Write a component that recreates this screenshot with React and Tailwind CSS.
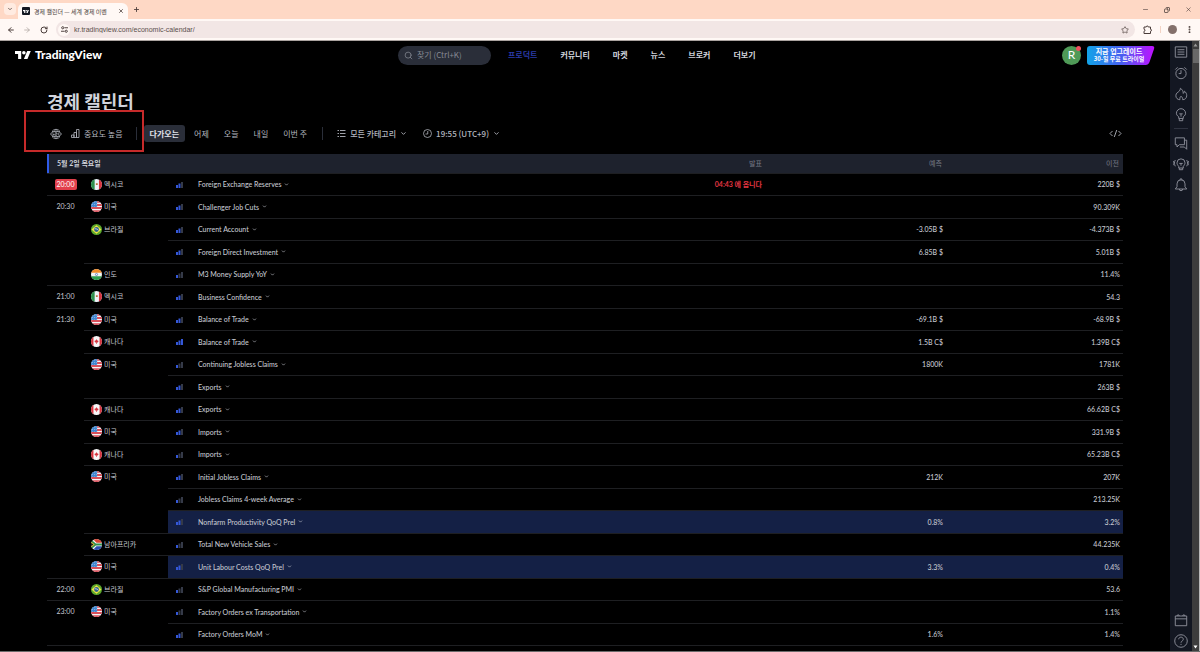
import { ChevronDown, ArrowLeft, ArrowRight, RotateCw, Star, X, Plus, Minus, Copy, MoreVertical, Search } from 'lucide-react';

// Event rows. `time` and `country` only appear on the row that opens their group,
// `timeSpan` / `countrySpan` say how many rows the group covers.
const EVENTS = [
  { time: '20:00', timeSpan: 1, live: true, country: 'mx', countrySpan: 1, level: 2, name: 'Foreign Exchange Reserves', actual: '04:43 에 옵니다', previous: '220B $' },
  { time: '20:30', timeSpan: 4, country: 'us', countrySpan: 1, level: 2, name: 'Challenger Job Cuts', previous: '90.309K' },
  { country: 'br', countrySpan: 2, level: 2, name: 'Current Account', forecast: '-3.05B $', previous: '-4.373B $' },
  { level: 2, name: 'Foreign Direct Investment', forecast: '6.85B $', previous: '5.01B $' },
  { country: 'in', countrySpan: 1, level: 1, name: 'M3 Money Supply YoY', previous: '11.4%' },
  { time: '21:00', timeSpan: 1, country: 'mx', countrySpan: 1, level: 2, name: 'Business Confidence', previous: '54.3' },
  { time: '21:30', timeSpan: 12, country: 'us', countrySpan: 1, level: 2, name: 'Balance of Trade', forecast: '-69.1B $', previous: '-68.9B $' },
  { country: 'ca', countrySpan: 1, level: 3, name: 'Balance of Trade', forecast: '1.5B C$', previous: '1.39B C$' },
  { country: 'us', countrySpan: 2, level: 1, name: 'Continuing Jobless Claims', forecast: '1800K', previous: '1781K' },
  { level: 2, name: 'Exports', previous: '263B $' },
  { country: 'ca', countrySpan: 1, level: 2, name: 'Exports', previous: '66.62B C$' },
  { country: 'us', countrySpan: 1, level: 2, name: 'Imports', previous: '331.9B $' },
  { country: 'ca', countrySpan: 1, level: 1, name: 'Imports', previous: '65.23B C$' },
  { country: 'us', countrySpan: 3, level: 2, name: 'Initial Jobless Claims', forecast: '212K', previous: '207K' },
  { level: 1, name: 'Jobless Claims 4-week Average', previous: '213.25K' },
  { level: 2, name: 'Nonfarm Productivity QoQ Prel', forecast: '0.8%', previous: '3.2%', marked: true },
  { country: 'za', countrySpan: 1, level: 1, name: 'Total New Vehicle Sales', previous: '44.235K' },
  { country: 'us', countrySpan: 1, level: 2, name: 'Unit Labour Costs QoQ Prel', forecast: '3.3%', previous: '0.4%', marked: true },
  { time: '22:00', timeSpan: 1, country: 'br', countrySpan: 1, level: 1, name: 'S&P Global Manufacturing PMI', previous: '53.6' },
  { time: '23:00', timeSpan: 2, country: 'us', countrySpan: 2, level: 1, name: 'Factory Orders ex Transportation', previous: '1.1%' },
  { level: 2, name: 'Factory Orders MoM', forecast: '1.6%', previous: '1.4%' },
];

const COUNTRIES = {
  mx: '멕시코',
  us: '미국',
  br: '브라질',
  in: '인도',
  ca: '캐나다',
  za: '남아프리카',
};

const NAV = ['프로덕트', '커뮤니티', '마켓', '뉴스', '브로커', '더보기'];
const RANGES = ['다가오는', '어제', '오늘', '내일', '이번 주'];

function Flag({ code }) {
  return (
    <svg viewBox="0 0 18 18" className="size-[11px] shrink-0 overflow-hidden rounded-full" aria-hidden="true">
      {code === 'mx' && (
        <>
          <path fill="#f0f3fa" d="M0 0h18v18H0z" />
          <path fill="#2f8f4e" d="M0 0h6v18H0z" />
          <path fill="#d8333f" d="M13 0h5v18h-5z" />
          <path fill="#b5793a" d="M8 7h3v3H8z" />
        </>
      )}
      {code === 'us' && (
        <>
          <path fill="#f5f5f7" d="M0 0h18v18H0z" />
          <path fill="#d9505b" d="M9 0h9v3H9zM9 5h9v3H9zM0 10h18v3H0zM0 15h18v3H0z" />
          <path fill="#3f86d0" d="M0 0h10v10H0z" />
          <path fill="#cfe0f5" d="M2 2h1v1H2zM5 2h1v1H5zM8 2h1v1H8zM2 5h1v1H2zM5 5h1v1H5zM8 5h1v1H8zM2 8h1v1H2zM5 8h1v1H5zM8 8h1v1H8z" />
        </>
      )}
      {code === 'br' && (
        <>
          <path fill="#5ba82c" d="M0 0h18v18H0z" />
          <path fill="#f0e442" d="M9 2q4 3 8 7-4 4-8 7-4-3-8-7 4-4 8-7z" />
          <circle cx="9" cy="9" r="4" fill="#2c6090" />
          <path stroke="#e8f1fb" strokeWidth="1.400" fill="none" d="M6 8c2-.5 4 0 6 2" />
        </>
      )}
      {code === 'in' && (
        <>
          <path fill="#f5f5f7" d="M0 0h18v18H0z" />
          <path fill="#f28c28" d="M0 0h18v6H0z" />
          <path fill="#2f9e4f" d="M0 12h18v6H0z" />
          <circle cx="9" cy="9" r="1.800" fill="none" stroke="#3c5aa8" />
        </>
      )}
      {code === 'ca' && (
        <>
          <path fill="#f7f7f8" d="M0 0h18v18H0z" />
          <path fill="#d5343f" d="M0 0h4v18H0zM14 0h4v18h-4z" />
          <path fill="#d5343f" d="m9 5 1 2 2.500 1-1.500 2.500H9.500V13h-1v-2.500H7L5.500 8 8 7z" />
        </>
      )}
      {code === 'za' && (
        <>
          <path fill="#f5f5f7" d="M0 0h18v18H0z" />
          <path fill="#d8432f" d="M3 0h15v6H9z" />
          <path fill="#2a4fae" d="M3 18h15v-6H9z" />
          <path fill="#2f8f4e" d="M0 1 8 7.500h10v3H8L0 17z" />
          <path fill="#f0bf30" d="m0 4 6 5-6 5z" />
          <path fill="#131722" d="m0 6 4 3-4 3z" />
        </>
      )}
    </svg>
  );
}

function Importance({ level }) {
  const on = '#3558d8';
  const off = '#353a48';
  return (
    <svg viewBox="0 0 7 7" className="size-[7px]" role="img" aria-label={`${level}`}>
      <path fill={on} d="M0 4h2v3H0z" />
      <path fill={level > 1 ? on : off} d="M2.500 2.500h2V7h-2z" />
      <path fill={level > 2 ? on : off} d="M5 1h2v6H5z" />
    </svg>
  );
}

function BrandMark({ className }) {
  return (
    <svg viewBox="0 0 36 18" className={className} fill="currentColor" aria-hidden="true">
      <path d="M14 18H7V7H0V0h14zM28 18h-8l7.500-18h8z" />
      <circle cx="20" cy="4" r="4" />
    </svg>
  );
}

function RailIcon({ label, children }) {
  return (
    <button type="button" aria-label={label} className="flex h-[21px] w-full items-center justify-center">
      <svg viewBox="0 0 28 28" className="size-4" fill="none" stroke="currentColor" strokeWidth="1.600" strokeLinejoin="round">
        {children}
      </svg>
    </button>
  );
}

function BrowserChrome() {
  return (
    <div className="shrink-0 border-b border-[#aaa39f] bg-[#fff8f5] text-[#4a3d3a]">
      <div className="flex h-[19px] items-end bg-[#fed8c5] pl-1">
        <button type="button" aria-label="tabs" className="mb-1 flex size-3 items-center justify-center rounded bg-[#ffebe1]">
          <ChevronDown size={6} strokeWidth={3} />
        </button>
        <div className="ml-[2px] flex h-4 w-[110px] items-center rounded-t-md bg-[#fff8f5] pl-1">
          <span className="flex size-2 shrink-0 items-center justify-center rounded-[1px] bg-[#131722] text-white">
            <BrandMark className="h-[3px] w-[6px]" />
          </span>
          <span className="ml-1 w-20 text-[6px] whitespace-nowrap">경제 캘린더 — 세계 경제 이벤</span>
          <button type="button" aria-label="close tab" className="ml-1">
            <X size={6} strokeWidth={3} />
          </button>
        </div>
        <button type="button" aria-label="new tab" className="mb-[6px] ml-[5px]">
          <Plus size={7} strokeWidth={3} />
        </button>
        <div className="mr-2 mb-[6px] ml-auto flex items-center gap-[15px]">
          <Minus size={7} strokeWidth={2} />
          <Copy size={6} strokeWidth={3} className="-scale-x-100" />
          <X size={7} strokeWidth={2} />
        </div>
      </div>
      <div className="flex h-[21px] items-center pr-[6px] pl-[7px]">
        <ArrowLeft size={8} strokeWidth={3} />
        <ArrowRight size={8} strokeWidth={2} className="ml-2 text-[#a39a96]" />
        <RotateCw size={8} strokeWidth={3} className="ml-[9px]" />
        <div className="ml-2 flex h-[17px] flex-1 items-center rounded-full bg-[#f2e6e5] pr-[6px] pl-[2px]">
          <span className="flex size-3 items-center justify-center rounded-full bg-[#fff8f5]">
            <svg viewBox="0 0 16 16" className="size-[7px]" fill="none" stroke="currentColor" strokeWidth="2.200" aria-hidden="true">
              <path d="M8 4h8M0 12h8" />
              <circle cx="4" cy="4" r="2.500" />
              <circle cx="12" cy="12" r="2.500" />
            </svg>
          </span>
          <input
            type="text"
            aria-label="address"
            defaultValue="kr.tradingview.com/economic-calendar/"
            className="ml-1 h-3 flex-1 bg-transparent font-['Liberation_Sans',sans-serif] text-[7px] text-[#5b4f4d] outline-none"
          />
          <Star size={8} strokeWidth={2} />
        </div>
        <svg viewBox="0 0 18 18" className="ml-2 size-[9px]" fill="none" stroke="currentColor" strokeWidth="2" strokeLinejoin="round" aria-hidden="true">
          <path d="M2 4h4.500a2 2 0 0 1 4 0H15v4.500a2 2 0 0 1 0 4V17H2v-4.500a2 2 0 0 0 0-4z" />
        </svg>
        <span className="ml-2 h-[7px] w-px bg-[#f3d3c4]" />
        <span className="ml-[7px] flex size-[9px] rounded-full bg-[#84706b]" />
        <MoreVertical size={9} strokeWidth={3} className="ml-2" />
      </div>
    </div>
  );
}

function SiteHeader() {
  return (
    <header className="flex h-7 items-center pr-[15px] pl-[15px] text-[8px] font-bold text-[#d1d4dc]">
      <a href="#home" className="flex items-center gap-1 text-white">
        <BrandMark className="h-2 w-4" />
        <span className="font-['Lato','Noto_Sans',sans-serif] text-xs leading-4 font-black">TradingView</span>
      </a>
      <label className="ml-[296px] flex h-[19px] w-[93px] items-center rounded-full bg-[#2a2e39] px-[6px] text-[#868993]">
        <Search size={9} strokeWidth={2} className="shrink-0" />
        <input type="search" aria-label="찾기" placeholder="찾기 (Ctrl+K)" className="ml-1 w-full min-w-0 bg-transparent text-[8px] font-normal outline-none placeholder:text-[#868993]" />
      </label>
      <nav className="ml-[17px] flex gap-[23px]">
        {NAV.map((item, i) => (
          <a key={item} href={`#${item}`} className={`whitespace-nowrap ${i === 0 ? 'text-[#2a3aa8]' : ''}`}>
            {item}
          </a>
        ))}
      </nav>
      <button type="button" aria-label="account" className="relative ml-auto flex size-[19px] items-center justify-center rounded-full bg-[#4f9a57] font-['Lato',sans-serif] text-xs font-normal text-white">
        R
        <span className="absolute top-0 right-0 size-[5px] rounded-full bg-[#f0525f]" />
      </button>
      <a href="#upgrade" className="relative ml-[6px] flex h-[19px] w-[68px] flex-col items-center justify-center pr-1 text-white">
        <svg viewBox="0 0 68 19" className="absolute inset-0 size-full" aria-hidden="true">
          <defs>
            <linearGradient id="upgrade">
              <stop offset="0" stopColor="#12a4e8" />
              <stop offset="0.500" stopColor="#4560f0" />
              <stop offset="1" stopColor="#c010ff" />
            </linearGradient>
          </defs>
          <path fill="url(#upgrade)" d="M3 0h62q3 0 2 3l-4.500 13q-1 3-4 3H3q-3 0-3-3V3q0-3 3-3z" />
        </svg>
        <span className="relative text-[7px] leading-[8px] whitespace-nowrap">지금 업그레이드</span>
        <span className="relative text-[6px] leading-[8px] whitespace-nowrap">30-일 무료 트라이얼</span>
      </a>
    </header>
  );
}

function Filters() {
  return (
    <div className="flex h-[17px] items-center text-[8px] text-[#b2b5be]">
      <button type="button" aria-label="G20" className="ml-[3px] flex">
        <svg viewBox="0 0 24 24" className="size-3" fill="none" stroke="currentColor" strokeWidth="1.500">
          <path d="M4 7a9.500 9.500 0 0 1 16 0M4 17a9.500 9.500 0 0 0 16 0M9 7c1-5 5-5 6 0M9 17c1 5 5 5 6 0M4 7h16M4 17h16" />
          <path d="M7 9.500H3.500Q1.500 9.500 1.500 12t2 2.500H7V12H5M9.500 9.500h4V12h-4v2.500h4.500M18 9.500h2q2.500 0 2.500 2.500t-2.500 2.500h-2q-2 0-2-2.500t2-2.500z" />
        </svg>
      </button>
      <button type="button" className="ml-[9px] flex items-center gap-1">
        <svg viewBox="0 0 18 18" className="size-[9px]" fill="none" stroke="currentColor" strokeWidth="1.600">
          <path d="M1 12h5v5H1zM6 7h5v10H6zM11 1h5v16h-5z" />
        </svg>
        중요도 높음
      </button>
      <span className="mr-[7px] ml-[13px] h-[13px] w-px bg-[#2a2e39]" />
      <div className="flex gap-[3px]">
        {RANGES.map((range, i) => (
          <button key={range} type="button" className={`h-[17px] rounded-[3px] px-[6px] whitespace-nowrap ${i === 0 ? 'bg-[#2a2e39] font-bold text-[#e0e3eb]' : ''}`}>
            {range}
          </button>
        ))}
      </div>
      <span className="mr-[14px] ml-[9px] h-[13px] w-px bg-[#2a2e39]" />
      <button type="button" className="flex items-center gap-1 font-medium whitespace-nowrap">
        <svg viewBox="0 0 18 18" className="size-[9px]" fill="none" stroke="currentColor" strokeWidth="1.800">
          <path d="M1 3h3M1 9h3M1 15h3M6 3h11M6 9h11M6 15h11" />
        </svg>
        모든 카테고리
        <ChevronDown size={7} strokeWidth={3} />
      </button>
      <button type="button" className="ml-4 flex items-center gap-1 font-medium whitespace-nowrap">
        <svg viewBox="0 0 18 18" className="size-[9px]" fill="none" stroke="currentColor" strokeWidth="1.600">
          <circle cx="9" cy="9" r="8" />
          <path d="M9.500 4v6H5" />
        </svg>
        19:55 (UTC+9)
        <ChevronDown size={7} strokeWidth={3} />
      </button>
      <button type="button" aria-label="embed" className="mr-px ml-auto">
        <svg viewBox="0 0 26 18" className="h-[9px] w-[13px]" fill="none" stroke="currentColor" strokeWidth="1.800">
          <path d="m7 4-5 5 5 5M19 4l5 5-5 5M15.500 2l-5 14" />
        </svg>
      </button>
    </div>
  );
}

function EventRow({ event }) {
  const cell = `border-t border-[#1e1f22] pb-px ${event.marked ? 'bg-[#142045]' : ''}`;
  return (
    <tr className="h-[22px] even:h-[23px]">
      {event.time && (
        <td rowSpan={event.timeSpan} className="border-t border-[#1e1f22] pt-[5px] text-center align-top">
          <span className={`inline-block rounded-[2px] px-[2px] leading-[11px] ${event.live ? 'bg-[#e2404c] text-white' : ''}`}>{event.time}</span>
        </td>
      )}
      {event.country && (
        <td rowSpan={event.countrySpan} className="border-t border-[#1e1f22] pt-[5px] pl-[7px] align-top">
          <span className="flex items-center gap-[2px] leading-[11px] whitespace-nowrap">
            <Flag code={event.country} />
            {COUNTRIES[event.country]}
          </span>
        </td>
      )}
      <td className={`${cell} pl-2`}>
        <Importance level={event.level} />
      </td>
      <td className={cell}>
        <button type="button" className="flex items-center gap-[3px] font-medium whitespace-nowrap">
          {event.name}
          <ChevronDown size={5} strokeWidth={3} />
        </button>
      </td>
      <td className={`${cell} pr-1 text-right font-bold text-[#e03540]`}>{event.actual}</td>
      <td className={`${cell} pr-[3px] text-right font-medium`}>{event.forecast}</td>
      <td className={`${cell} pr-[3px] text-right font-medium`}>{event.previous}</td>
    </tr>
  );
}

function CalendarTable() {
  return (
    <table className="mt-3 w-full table-fixed border-separate border-spacing-0 border-b border-[#1e1f22] font-['Lato','Noto_Sans_CJK_KR',sans-serif] text-[7px] leading-[10px] text-[#c5c8d0]">
      <colgroup>
        <col className="w-[37px]" />
        <col className="w-[84px]" />
        <col className="w-[30px]" />
        <col />
        <col className="w-[180px]" />
        <col className="w-[180px]" />
        <col className="w-[177px]" />
      </colgroup>
      <thead>
        <tr className="h-[19px] bg-[#1e222d] text-[#787b86]">
          <th colSpan={4} scope="col" className="border-l-2 border-[#2f5be8] pb-px pl-2 text-left text-[#d1d4dc]">5월 2일 목요일</th>
          <th scope="col" className="pr-1 pb-px text-right font-normal">발표</th>
          <th scope="col" className="pr-1 pb-px text-right font-normal">예측</th>
          <th scope="col" className="pr-1 pb-px text-right font-normal">이전</th>
        </tr>
      </thead>
      <tbody>
        {EVENTS.map((event, i) => (
          <EventRow key={i} event={event} />
        ))}
      </tbody>
    </table>
  );
}

function SideRail() {
  return (
    <aside className="flex w-[22px] shrink-0 flex-col bg-[#131722] text-[#8f929c]">
      <RailIcon label="watchlist">
        <rect x="4" y="5" width="20" height="18" />
        <path d="M8 10h12M8 14h12M8 18h12" />
      </RailIcon>
      <RailIcon label="alerts">
        <circle cx="14" cy="15" r="9" />
        <path d="M14 9v6h-4M4 8l4-4M24 8l-4-4" />
      </RailIcon>
      <RailIcon label="hotlist">
        <path d="M13 4c3 2 5 5 5 9 1-1 2-2 2-4 3 2 4 5 4 8 0 4-3 7-7 7 0-3-1-5-3-6-2 1-2 3-2 6-4 0-7-3-7-7 0-5 4-6 6-8 1-1 2-3 2-5z" />
      </RailIcon>
      <RailIcon label="ideas">
        <path d="M10 20v-3c-3-2-4-4-4-6a8 8 0 0 1 16 0c0 2-1 4-4 6v3zM11 20v4h6v-4M11 12h6M14 12v5" />
      </RailIcon>
      <span className="mx-1 my-[3px] h-px shrink-0 bg-[#2f3340]" />
      <RailIcon label="chat">
        <path d="M4 5h16v12H11l-4 4v-4H4zM20 9h4v16l-4-4h-8" />
      </RailIcon>
      <RailIcon label="streams">
        <path d="M10 21v-3c-2-2-3-4-3-6a7 7 0 0 1 14 0c0 2-1 4-3 6v3zM11 21v3h6v-3M11 13h6M14 13v4M4 7c-2 4-2 7 0 11M24 7c2 4 2 7 0 11M1 9c-1 3-1 5 0 7M27 9c1 3 1 5 0 7" />
      </RailIcon>
      <RailIcon label="notifications">
        <path d="M4 21h20l-3-4v-5a7 7 0 0 0-14 0v5zM11 21a3 3 0 0 0 6 0M12 5a2 2 0 0 1 4 0" />
      </RailIcon>
      <div className="mt-auto">
        <RailIcon label="calendar">
          <path d="M4 7h20v17H4zM4 12h20M7 7a2 2 0 1 1 4 0M17 7a2 2 0 1 1 4 0" />
        </RailIcon>
        <RailIcon label="help">
          <circle cx="14" cy="14" r="11" />
          <path d="M10 11c0-5 8-5 8 0 0 3-4 3-4 6M14 19v2" />
        </RailIcon>
      </div>
    </aside>
  );
}

function Scrollbar() {
  return (
    <div className="flex w-2 shrink-0 flex-col items-center border-r border-[#b9b9b9] bg-[#3d3d3d] text-[#9a9a9a]">
      <svg viewBox="0 0 7 8" className="h-2 w-[7px]" fill="currentColor" aria-hidden="true">
        <path d="m3.500 2.500 2 3h-4z" />
      </svg>
      <span className="h-[14px] w-[6px] bg-[#686868]" />
      <svg viewBox="0 0 7 8" className="mt-auto h-2 w-[7px] text-white" fill="currentColor" aria-hidden="true">
        <path d="m3.500 5.500 2-3h-4z" />
      </svg>
    </div>
  );
}

function App() {
  return (
    <div className="flex h-screen flex-col overflow-hidden bg-black font-['Noto_Sans_CJK_KR','Noto_Sans',sans-serif]">
      <BrowserChrome />
      <div className="flex min-h-0 flex-1 border-b border-[#6b6b6b]">
        <div className="min-w-0 flex-1 overflow-hidden">
          <SiteHeader />
          <main className="px-[47px] pt-5">
            <h1 className="text-lg leading-6 font-bold text-[#d1d4dc]">경제 캘린더</h1>
            <div className="relative mt-3">
              <Filters />
              {/* highlight frame around the country / importance filters */}
              <div className="pointer-events-none absolute -top-[15px] -left-[23px] h-[42px] w-[120px] border-2 border-[#c62a2a]" />
            </div>
            <CalendarTable />
          </main>
        </div>
        <SideRail />
        <Scrollbar />
      </div>
    </div>
  );
}

export default App;
